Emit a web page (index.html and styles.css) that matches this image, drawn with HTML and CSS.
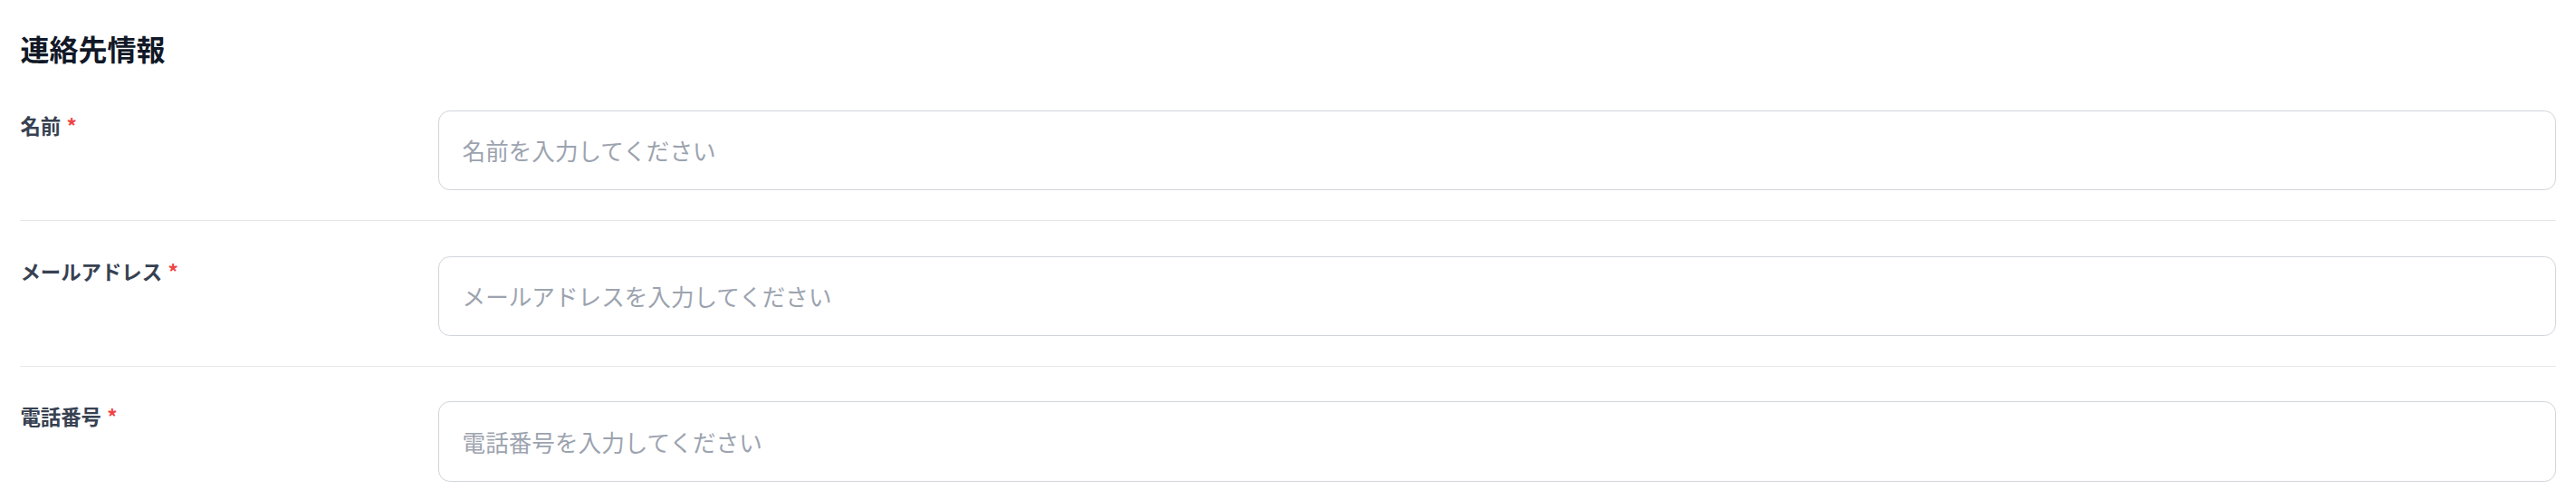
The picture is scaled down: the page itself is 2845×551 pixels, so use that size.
FILE: index.html
```html
<!DOCTYPE html>
<html lang="ja">
<head>
<meta charset="utf-8">
<title>連絡先情報</title>
<link rel="stylesheet" href="styles.css">
</head>
<body>
<section class="page">
  <h2 class="title">連絡先情報</h2>
  <div class="rows">
    <div class="row">
      <label class="label" for="name">名前<span class="req">*</span></label>
      <input class="field" id="name" type="text" placeholder="名前を入力してください">
    </div>
    <div class="row">
      <label class="label" for="email">メールアドレス<span class="req">*</span></label>
      <input class="field" id="email" type="email" placeholder="メールアドレスを入力してください">
    </div>
    <div class="row">
      <label class="label" for="tel">電話番号<span class="req">*</span></label>
      <input class="field" id="tel" type="tel" placeholder="電話番号を入力してください">
    </div>
  </div>
</section>
</body>
</html>
```

FILE: styles.css
```css
html, body {
  margin: 0;
  padding: 0;
  background: #ffffff;
}

body {
  font-family: "Noto Sans CJK JP", "Noto Sans", sans-serif;
  color: #374151;
}

.page {
  padding: 30.5px 22.4px 0 22.4px;
}

.title {
  margin: 0 0 8px 0;
  font-size: 32px;
  line-height: 44.8px;
  font-weight: 700;
  color: #111827;
}

.rows {
  display: flex;
  flex-direction: column;
}

.row {
  display: grid;
  grid-template-columns: 409.6px 1fr;
  column-gap: 52px;
  align-items: start;
  padding: 38.4px 0 33px 0;
  border-bottom: 1px solid #e5e7eb;
}

.row:last-child {
  border-bottom: none;
}

.label {
  font-size: 22.4px;
  line-height: 32px;
  font-weight: 600;
  color: #374151;
}

.req {
  margin-left: 6.4px;
  color: #ef4444;
}

.field {
  box-sizing: border-box;
  width: 100%;
  height: 88.5px;
  margin: 0;
  padding: 0 25.6px;
  border: 1px solid #d1d5db;
  border-radius: 12.8px;
  background: #ffffff;
  font-family: "Noto Sans CJK JP", "Noto Sans", sans-serif;
  font-size: 25.6px;
  color: #111827;
  outline: none;
}

.field::placeholder {
  color: #9ca3af;
  opacity: 1;
}
```
